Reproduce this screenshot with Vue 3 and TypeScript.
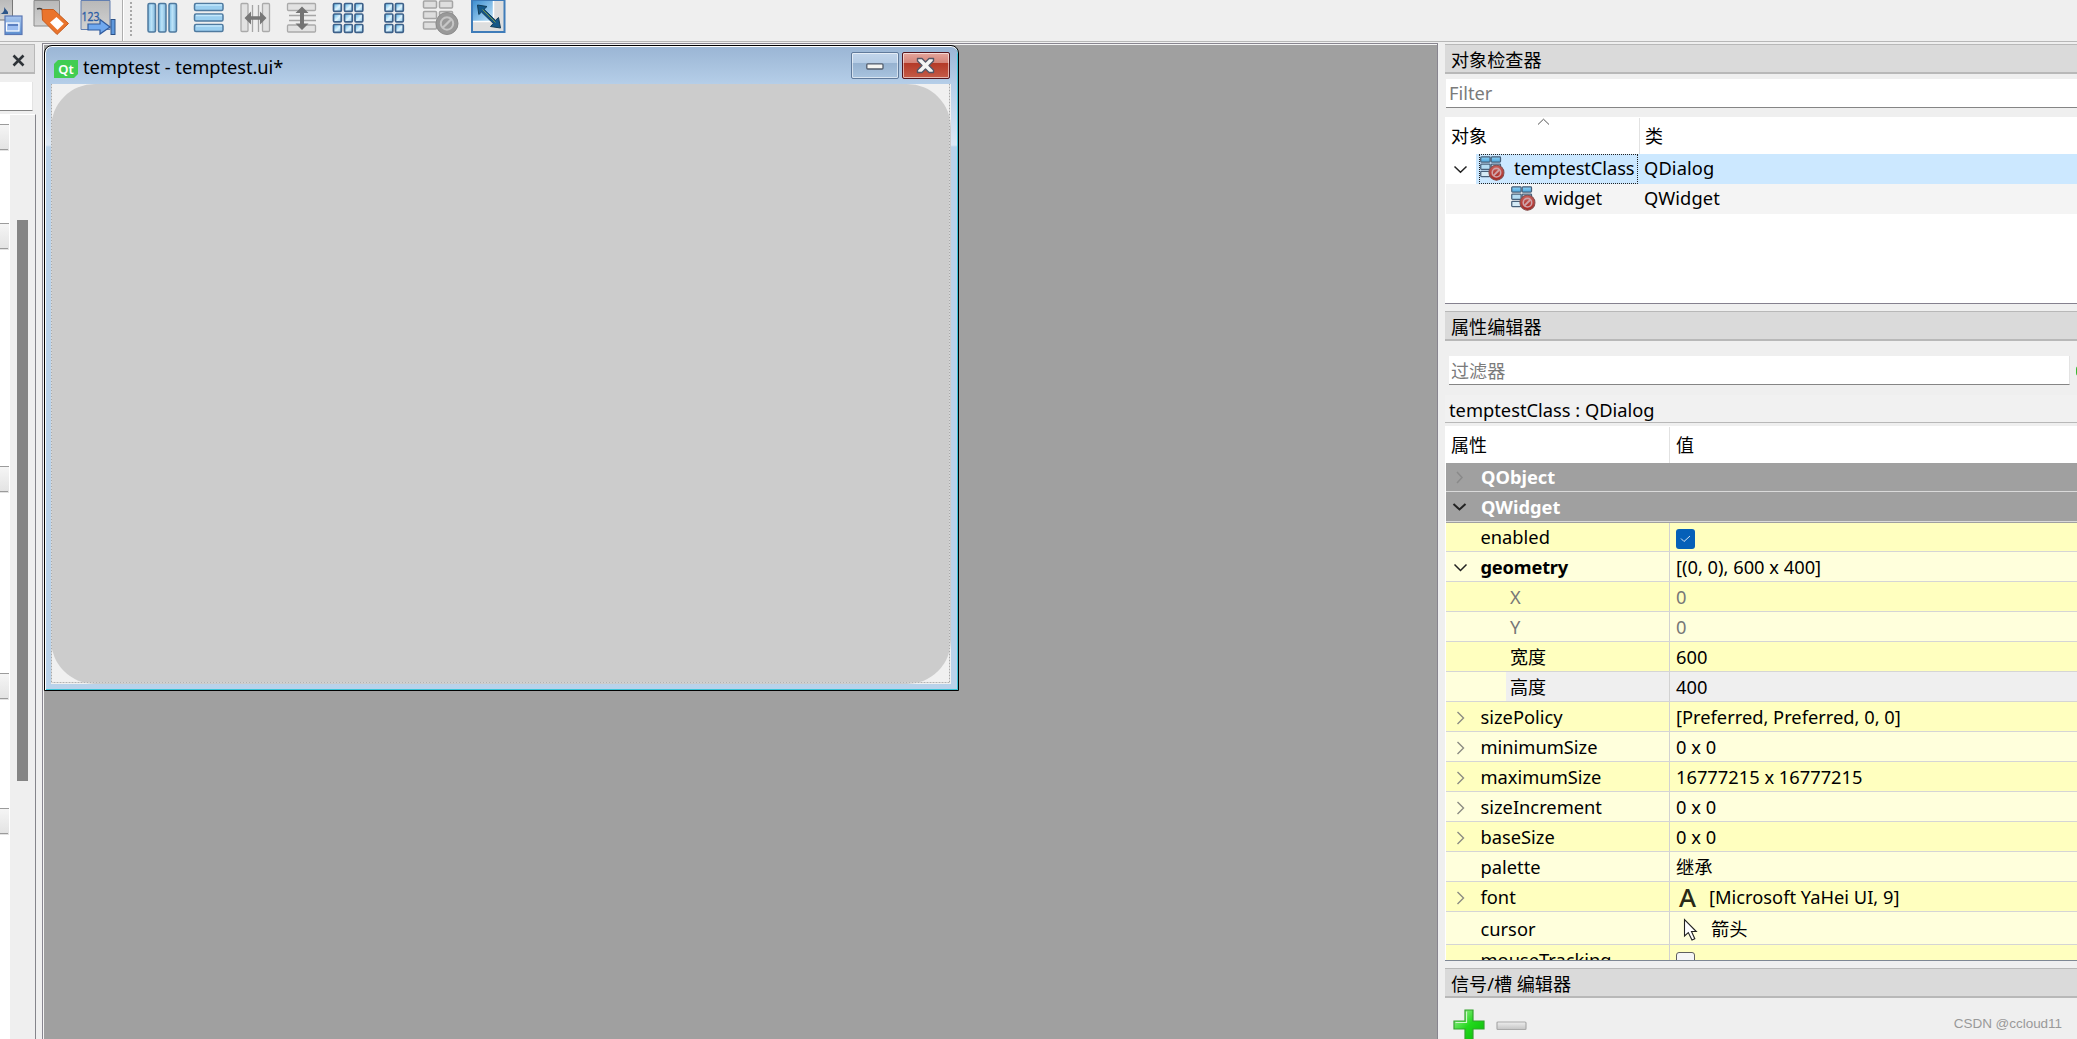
<script setup lang="ts">
interface Prop {
  name: string
  value: string
  kind?: 'child' | 'disabled' | 'selected' | 'check' | 'font' | 'cursor' | 'clipped'
  arrow?: 'open' | 'closed'
  bold?: boolean
}

const rows: Prop[] = [
  { name: 'enabled', value: '', kind: 'check' },
  { name: 'geometry', value: '[(0, 0), 600 x 400]', arrow: 'open', bold: true },
  { name: 'X', value: '0', kind: 'disabled' },
  { name: 'Y', value: '0', kind: 'disabled' },
  { name: '宽度', value: '600', kind: 'child' },
  { name: '高度', value: '400', kind: 'selected' },
  { name: 'sizePolicy', value: '[Preferred, Preferred, 0, 0]', arrow: 'closed' },
  { name: 'minimumSize', value: '0 x 0', arrow: 'closed' },
  { name: 'maximumSize', value: '16777215 x 16777215', arrow: 'closed' },
  { name: 'sizeIncrement', value: '0 x 0', arrow: 'closed' },
  { name: 'baseSize', value: '0 x 0', arrow: 'closed' },
  { name: 'palette', value: '继承' },
  { name: 'font', value: '[Microsoft YaHei UI, 9]', kind: 'font', arrow: 'closed' },
  { name: 'cursor', value: '箭头', kind: 'cursor' },
  { name: 'mouseTracking', value: '', kind: 'clipped' },
]

const objects = [
  { name: 'temptestClass', cls: 'QDialog', root: true },
  { name: 'widget', cls: 'QWidget', root: false },
]

const gridX = [333, 344, 354.5]
const gridX2 = [384.5, 395]
const gridY = [3, 13.5, 24]
</script>

<template>
  <div class="app">
    <svg class="defs" width="0" height="0" aria-hidden="true">
      <defs>
        <linearGradient id="bar" x1="0" y1="0" x2="1" y2="0">
          <stop offset="0" stop-color="#7cbbe3" /><stop offset=".45" stop-color="#bce4fa" /><stop offset="1" stop-color="#7fb4d8" />
        </linearGradient>
        <linearGradient id="cell" x1="0" y1="0" x2="1" y2="1">
          <stop offset="0" stop-color="#4fb0e6" /><stop offset=".55" stop-color="#dff3fd" /><stop offset="1" stop-color="#7fc0e4" />
        </linearGradient>
        <linearGradient id="tile" x1="0" y1="0" x2="0" y2="1">
          <stop offset="0" stop-color="#8fd0f4" /><stop offset="1" stop-color="#4aa6dc" />
        </linearGradient>
        <linearGradient id="paper" x1="0" y1="0" x2="0" y2="1">
          <stop offset="0" stop-color="#b8b8b8" /><stop offset="1" stop-color="#d2d2d2" />
        </linearGradient>
        <linearGradient id="blue" x1="0" y1="0" x2="0" y2="1">
          <stop offset="0" stop-color="#a9c6ee" /><stop offset="1" stop-color="#5c8fd0" />
        </linearGradient>
        <linearGradient id="sky" x1="0" y1="0" x2="1" y2="1">
          <stop offset="0" stop-color="#3f8fd0" /><stop offset="1" stop-color="#bfe4fa" />
        </linearGradient>
        <linearGradient id="red" x1="0" y1="0" x2="0" y2="1">
          <stop offset="0" stop-color="#c9605a" /><stop offset="1" stop-color="#a82622" />
        </linearGradient>
        <linearGradient id="green" x1="0" y1="0" x2="1" y2="1">
          <stop offset="0" stop-color="#b4f0a8" /><stop offset=".5" stop-color="#23d81d" /><stop offset="1" stop-color="#08b806" />
        </linearGradient>
        <linearGradient id="silver" x1="0" y1="0" x2="0" y2="1">
          <stop offset="0" stop-color="#ededed" /><stop offset="1" stop-color="#c4c4c4" />
        </linearGradient>
        <symbol id="layout" viewBox="0 0 24 24">
          <g stroke="#47607a" stroke-width="1.2">
            <rect x=".7" y=".8" width="9" height="5" rx=".8" fill="url(#tile)" /><rect x="10.700" y=".8" width="9" height="5" rx=".8" fill="url(#tile)" />
            <rect x=".7" y="7.800" width="9" height="5" rx=".8" fill="#b4dcf2" /><rect x="10.700" y="7.800" width="9" height="5" rx=".8" fill="#b4dcf2" />
            <rect x=".7" y="14.800" width="9" height="5" rx=".8" fill="#d5eaf5" />
          </g>
          <circle cx="15.800" cy="16" r="7.200" fill="url(#red)" stroke="#87504f" stroke-width="1" />
          <circle cx="15.800" cy="16" r="4.100" fill="none" stroke="#cfa3a8" stroke-width="1.500" />
          <path d="M13 18.800l5.600-5.600" stroke="#cfa3a8" stroke-width="1.700" />
        </symbol>
      </defs>
    </svg>

    <header class="toolbar">
      <svg width="28" height="36" viewBox="0 0 28 36">
        <path d="M-2-2H12.500V20H-2z" fill="url(#paper)" stroke="#777" />
        <path d="M-3 15C3 14 5 11 4 7L8 12V14H-3z" fill="#2e5689" />
        <rect x="5" y="16" width="17" height="18.500" fill="url(#blue)" stroke="#5a77b4" stroke-width="1.200" />
        <rect x="6.500" y="23" width="12.500" height="8" fill="#9cbdf0" stroke="#fff" stroke-width="1.200" />
        <path d="M8 25h10" stroke="#466bb0" stroke-width="1.500" />
      </svg>
      <svg width="46" height="36" viewBox="28 0 46 36">
        <path d="M34 .5H59.500V26H34z" fill="url(#paper)" stroke="#8b8b8b" />
        <path d="M37 9q5-2 9 5" fill="none" stroke="#404040" stroke-width="1.500" />
        <path d="M42 9.500L53.500 9.500 68.500 23.500 57 34.500 42.500 20z" fill="#ea742c" stroke="#c45a1c" />
        <path d="M56.500 17L63.800 23.800 57.500 30 50 22.500z" fill="#fff" />
      </svg>
      <svg width="48" height="36" viewBox="74 0 48 36">
        <path d="M81 .5H110V29.500H81z" fill="url(#paper)" stroke="#637fb0" />
        <text x="81.500" y="21" class="icon-digits" textLength="18" lengthAdjust="spacingAndGlyphs">123</text>
        <path d="M88 24H100V19.500L110 27 100 34V30H88z" fill="#70a8ee" stroke="#2f5a9d" stroke-width="1.200" />
        <rect x="111" y="19.500" width="4" height="15" fill="#5f98dc" stroke="#2c5288" />
      </svg>
      <svg width="18" height="41" viewBox="122 0 18 41">
        <path d="M122.500 0V41" stroke="#adadad" /><path d="M123.500 0V41" stroke="#fff" />
        <path d="M131 2V36" stroke="#a8a8a8" stroke-width="2" stroke-dasharray="2 2" />
      </svg>
      <svg width="45" height="36" viewBox="140 0 45 36">
        <rect v-for="x in [148, 158.500, 169]" :key="x" :x="x" y="3.500" width="7.500" height="28.500" rx="1.500" fill="url(#bar)" stroke="#4f7a9f" stroke-width="1.500" />
      </svg>
      <svg width="47" height="36" viewBox="185 0 47 36">
        <rect v-for="y in [3.500, 14, 24.500]" :key="y" x="194.500" :y="y" width="28.500" height="7" rx="1.500" fill="#9bcff0" stroke="#4f7a9f" stroke-width="1.500" />
        <path d="M196 5h26M196 15.500h26M196 26h26" stroke="#c4e8fc" stroke-width="1.500" />
      </svg>
      <svg width="46" height="36" viewBox="232 0 46 36">
        <g fill="#e2e2e2" stroke="#aaa" stroke-width="1.300"><rect x="241" y="3.500" width="7" height="28" rx="1" /><rect x="262.500" y="3.500" width="7" height="28" rx="1" /></g>
        <path d="M252.500 5V32M258.500 5V32" stroke="#a5a5a5" stroke-width="1.300" />
        <path d="M244.500 18L251 11.500V16.200H260V11.500L266.500 18 260 24.500V19.800H251V24.500z" fill="#777" />
      </svg>
      <svg width="46" height="36" viewBox="278 0 46 36">
        <g fill="#e2e2e2" stroke="#aaa" stroke-width="1.300"><rect x="287.500" y="3.500" width="28" height="7" rx="1" /><rect x="287.500" y="25" width="28" height="7" rx="1" /></g>
        <path d="M289 15.500H316M289 20.500H316" stroke="#a5a5a5" stroke-width="1.300" />
        <path d="M302 6.500L308.500 13H304V23.500H308.500L302 30 295.500 23.500H300V13H295.500z" fill="#747474" />
      </svg>
      <svg width="47" height="36" viewBox="324 0 47 36">
        <template v-for="y in gridY" :key="y">
          <rect v-for="x in gridX" :key="x" :x="x + .500" :y="y + .500" width="7.800" height="7.800" rx="1" fill="url(#cell)" stroke="#3d6089" stroke-width="1.700" />
        </template>
      </svg>
      <svg width="43" height="36" viewBox="371 0 43 36">
        <template v-for="y in gridY" :key="y">
          <rect v-for="x in gridX2" :key="x" :x="x + .500" :y="y + .500" width="7.800" height="7.800" rx="1" fill="url(#cell)" stroke="#3d6089" stroke-width="1.700" />
        </template>
      </svg>
      <svg width="51" height="36" viewBox="414 0 51 36">
        <g fill="#dedede" stroke="#a5a5a5" stroke-width="1.500">
          <rect x="423.500" y="1" width="13" height="7" rx="1" /><rect x="439.500" y="1" width="13" height="7" rx="1" />
          <rect x="423.500" y="11.500" width="13" height="7" rx="1" /><rect x="439.500" y="11.500" width="13" height="7" rx="1" />
          <rect x="423.500" y="22" width="13" height="7" rx="1" />
        </g>
        <circle cx="447" cy="23.500" r="11" fill="#999" stroke="#8c8c8c" />
        <circle cx="447" cy="23.500" r="6.200" fill="none" stroke="#c6c6c6" stroke-width="2" />
        <path d="M442.700 27.800l8.600-8.600" stroke="#c6c6c6" stroke-width="2.300" />
      </svg>
      <svg width="47" height="36" viewBox="465 0 47 36">
        <rect x="472" y="0" width="32.500" height="32" fill="#dedede" stroke="#3f7cb9" stroke-width="2" />
        <rect x="473" y="1" width="20" height="20" fill="url(#sky)" />
        <path d="M493.500 1V21.500H473" fill="none" stroke="#fff" stroke-width="1.500" />
        <path d="M477.500 5L487 6.500 484 9.300 495.500 20.300 498.500 17.500 500.500 28 490.500 26.500 493.300 23.500 481.500 12 478.800 14.500z" fill="#155787" stroke="#123c58" />
        <path d="M482.500 9.500L495.500 22.500" stroke="#7d9844" stroke-width="1" />
      </svg>
    </header>

    <main class="body">
      <aside class="left">
        <div class="left-title"><svg width="13" height="13" viewBox="0 0 13 13"><path d="M1.500 1.500L11.500 11.500M11.500 1.500L1.500 11.500" stroke="#2e3338" stroke-width="2.600" /></svg></div>
        <div class="left-edit"></div>
        <div class="left-body">
          <div class="left-list"><i></i><i></i><i></i><i></i><i></i></div>
          <div class="scroll"><div class="thumb"></div></div>
        </div>
      </aside>

      <section class="mdi">
        <div class="window">
          <div class="win-title">
            <span class="qt">Qt</span>
            <span class="win-name">temptest - temptest.ui*</span>
            <span class="win-btn min"><svg width="18" height="7" viewBox="0 0 18 7"><rect x=".8" y=".8" width="16.200" height="5.200" rx="1" fill="#f5f5f2" stroke="#515c6c" stroke-width="1.300" /></svg></span>
            <span class="win-btn close"><svg width="19" height="17" viewBox="0 0 19 17"><path d="M1.500 1.500H6L9.500 5 13 1.500h4.500V4L13 8.500 17.500 13v2.500H13L9.500 12 6 15.500H1.500V13L6 8.500 1.500 4z" fill="#f4f4f4" stroke="#535666" stroke-width="1.400" stroke-linejoin="round" /></svg></span>
          </div>
          <div class="canvas"><div class="form"></div></div>
        </div>
      </section>

      <aside class="right">
        <div class="dock">对象检查器</div>
        <div class="filter f1">Filter</div>
        <div class="tree">
          <div class="tree-head">
            <span class="c1">对象</span><span class="c2">类</span>
            <svg class="sort" width="13" height="8" viewBox="0 0 13 8"><path d="M1 6.500L6.500 1.200 12 6.500" fill="none" stroke="#555" stroke-width="1" /></svg>
          </div>
          <div v-for="o in objects" :key="o.name" class="tree-row" :class="{ root: o.root }">
            <div class="branch">
              <svg v-if="o.root" width="15" height="9" viewBox="0 0 15 9"><path d="M1.500 1.500L7.500 7.300 13.500 1.500" fill="none" stroke="#222" stroke-width="1.500" /></svg>
            </div>
            <div class="item" :class="{ focus: o.root }">
              <svg width="25" height="25"><use href="#layout" width="25" height="25" /></svg>
              <span>{{ o.name }}</span>
            </div>
            <span class="cls">{{ o.cls }}</span>
          </div>
        </div>

        <div class="dock">属性编辑器</div>
        <div class="filter-row"><div class="filter f2">过滤器</div><span class="add-edge"></span></div>
        <div class="obj-label">temptestClass : QDialog</div>
        <div class="props">
          <div class="prop-head"><span class="p1">属性</span><span>值</span></div>
          <div class="group">
            <svg class="garrow" width="15" height="15" viewBox="0 0 15 15"><path d="M5 2L10 7.500 5 13" fill="none" stroke="#8a8a8a" stroke-width="1.500" /></svg>QObject
          </div>
          <div class="group second">
            <svg class="garrow" width="15" height="15" viewBox="0 0 15 15"><path d="M1.500 4L7.500 9.500 13.500 4" fill="none" stroke="#222" stroke-width="2" /></svg>QWidget
          </div>
          <div v-for="(r, i) in rows" :key="r.name" class="prop" :class="[r.kind, { alt: i % 2 === 1 }]">
            <div class="pn">
              <svg v-if="r.arrow" class="arrow" width="15" height="15" viewBox="0 0 15 15">
                <path v-if="r.arrow === 'open'" d="M1.500 4.500L7.500 10.500 13.500 4.500" fill="none" stroke="#222" stroke-width="1.500" />
                <path v-else d="M4.500 2L10.500 8 4.500 14" fill="none" stroke="#8b8b83" stroke-width="1.400" />
              </svg>
              <span class="nm" :class="{ bold: r.bold }">{{ r.name }}</span>
            </div>
            <div class="pv">
              <span v-if="r.kind === 'check'" class="tick"><svg width="11" height="8" viewBox="0 0 11 8"><path d="M1 3.500L4 6.500 10 1" fill="none" stroke="#d3e4f3" stroke-width="1" /></svg></span>
              <span v-if="r.kind === 'clipped'" class="box"></span>
              <span v-if="r.kind === 'font'" class="letter">A</span>
              <svg v-if="r.kind === 'cursor'" class="pointer" width="15" height="24" viewBox="0 0 15 24"><path d="M1.500 1.500V18L5.300 14.600 9 22 11.800 20.800 8.500 13.500H13.300z" fill="#fff" stroke="#222" stroke-width="1.100" /></svg>
              <span class="val">{{ r.value }}</span>
            </div>
          </div>
        </div>

        <div class="dock">信号/槽 编辑器</div>
        <footer class="signals">
          <svg width="32" height="32" viewBox="0 0 32 32"><path d="M12 1H20V12H31V20H20V31H12V20H1V12H12z" fill="url(#green)" stroke="#32a32d" stroke-width="1.200" /><path d="M13.500 2.500V13.500H2.500" fill="none" stroke="#d1f7cc" stroke-width="1.200" /></svg>
          <svg class="minus" width="31" height="10" viewBox="0 0 31 10"><rect x="1" y="1" width="29" height="7.500" rx="1" fill="url(#silver)" stroke="#aaa" stroke-width="1.200" /></svg>
          <span class="mark">CSDN @ccloud11</span>
        </footer>
      </aside>
    </main>
  </div>
</template>

<style>
body { margin: 0; overflow: hidden; background: #efefef; }
</style>

<style scoped>
* { box-sizing: border-box; }
.app { width: 2077px; height: 1039px; overflow: hidden; display: flex; flex-direction: column; background: #efefef; color: #000; font: 18.300px/30px "Noto Sans", "Noto Sans CJK SC", sans-serif; white-space: nowrap; }
.defs { position: absolute; }
.toolbar { height: 42px; flex: none; display: flex; align-items: flex-start; border-bottom: 1px solid #b7b7b7; }
.toolbar svg, .item svg { flex: none; display: block; }
.icon-digits { font: 13px "Noto Sans", sans-serif; fill: #2b5da5; stroke: #2b5da5; stroke-width: .3; }
.body { flex: 1; min-height: 0; display: flex; }

.left { width: 36px; flex: none; padding-top: 2px; display: flex; flex-direction: column; }
.left-title { width: 35px; height: 30px; background: #dadada; border: 1px solid #b8b8b8; border-left: 0; border-bottom-width: 2px; display: flex; align-items: center; padding: 4px 0 0 12px; }
.left-edit { width: 33px; height: 29px; margin-top: 8px; background: #fff; border-bottom: 1px solid #858585; border-right: 1px solid #e3e3e3; }
.left-body { flex: 1; margin-top: 3px; display: flex; border-right: 1px solid #85858b; border-top: 1px solid #fff; }
.left-list { width: 10px; background: #fff; display: flex; flex-direction: column; padding-top: 9px; }
.left-list i { width: 9px; height: 27px; border-top: 1px solid #9b9b9b; background: linear-gradient(#9b9b9b, #9b9b9b) 0 24px / 8px 1px no-repeat, linear-gradient(#f5f5f5, #e2e2e2); margin-bottom: 72px; flex: none; }
.left-list i:nth-child(2) { margin-bottom: 216px; }
.left-list i:nth-child(3) { margin-bottom: 180px; }
.left-list i:nth-child(4) { margin-bottom: 108px; }
.scroll { padding: 105px 0 0 7px; }
.thumb { width: 11px; height: 561px; background: #858585; }

.mdi { width: 1396px; flex: none; margin: 1px 0 0 6px; border: 1px solid #88858f; border-bottom: 0; background: #a0a0a0; padding: 1px 0 0 1px; box-shadow: inset 0 1px #f4f4f4, inset 1px 0 #f4f4f4; }
.window { width: 915px; height: 646px; border: 1px solid #000; border-radius: 8px 8px 0 0; background: linear-gradient(#9ab5d4 0, #b5cee8 38px, #dce8f5 99px, #b9d2ea 101px); box-shadow: inset 0 1px #fff, inset 1px 0 #fff, inset -1px -1px #3ac2d6; padding: 1px 6px 5px; display: flex; flex-direction: column; }
.win-title { height: 37px; flex: none; display: flex; align-items: center; padding-left: 3px; }
.qt { width: 24px; height: 18px; margin-top: 7px; background: #41cd52; color: #fff; font: 600 13px/18px "Noto Sans", sans-serif; text-align: center; clip-path: polygon(4px 0, 100% 0, 100% 14px, 20px 100%, 0 100%, 0 4px); }
.win-name { margin: 3px 0 0 5px; flex: 1; letter-spacing: -.05px; }
.win-btn { width: 48px; height: 27px; margin-top: -1px; border: 1px solid #607a9b; border-radius: 2px; box-shadow: inset 0 0 0 1px #ffffff90; background: linear-gradient(#c2d5eb, #b5cce5 41%, #96b2d0 42%, #a9c4df); display: flex; align-items: center; justify-content: center; }
.min { padding-top: 3px; padding-right: 1px; }
.close { margin-left: 3px; margin-right: 2px; border-color: #54151d; background: linear-gradient(#e5a59c, #d38378 41%, #b43a28 42%, #c55c48); padding-right: 1px; }
.canvas { width: 900px; height: 600px; background: #f0f0f0; position: relative; }
.canvas::after { content: ""; position: absolute; inset: 0 1px 1px 0; background: repeating-linear-gradient(#a8a8a8 0 1px, #d6d6d6 1px 3px) 0 0 / 1px 100% no-repeat, repeating-linear-gradient(#a8a8a8 0 1px, #d6d6d6 1px 3px) 100% 0 / 1px 100% no-repeat, repeating-linear-gradient(90deg, #b2b2b2 0 1px, #d2d2d2 1px 3px) 0 100% / 100% 1px no-repeat; }
.form { width: 900px; height: 600px; border-radius: 44px; background: #ccc; }

.right { flex: 1; min-width: 0; margin: 2px 0 0 7px; display: flex; flex-direction: column; }
.dock { height: 30px; flex: none; background: #dadada; border-top: 1px solid #b8b8b8; border-bottom: 2px solid #b8b8b8; padding-left: 6px; line-height: 30px; font-size: 18.100px; }
.filter { height: 29px; background: #fff; color: #7b7b7b; border-bottom: 1px solid #858585; line-height: 28px; }
.f1 { flex: none; margin: 5px 0 9px 1px; padding-left: 3px; }
.tree { height: 187px; flex: none; background: #fff; border-bottom: 1px solid #85818f; }
.tree-head { height: 37px; position: relative; display: flex; padding-left: 6px; line-height: 38px; font-size: 18px; }
.c1 { width: 189px; border-right: 1px solid #e2e2e2; margin-top: 1px; line-height: 37px; }
.c2 { padding-left: 5px; }
.sort { position: absolute; left: 92px; top: 1px; }
.tree-row { height: 30px; display: flex; background: #f4f4f4; margin-left: 1px; }
.tree-row.root { background: linear-gradient(90deg, #fff 30px, #cce8ff 30px); }
.branch { width: 33px; padding-left: 7px; display: flex; align-items: center; }
.tree-row:not(.root) .branch { width: 63px; }
.item { width: 159px; height: 30px; display: flex; align-items: center; line-height: 28px; letter-spacing: -.08px; }
.item span { margin-top: -2px; }
.item:not(.focus) { width: 129px; padding-left: 2px; }
.item svg { margin: -1px 8px 0 0; }
.focus { outline: 1px dotted #222; outline-offset: -1px; padding-left: 1px; }
.focus svg { margin-right: 9px; }
.cls { padding-left: 6px; line-height: 28px; letter-spacing: .1px; }
.tree + .dock { margin-top: 7px; }
.filter-row { height: 29px; flex: none; margin: 15px 0 10px 4px; display: flex; align-items: center; overflow: hidden; }
.f2 { width: 621px; flex: none; padding-left: 2px; font-size: 18.100px; line-height: 31px; border-right: 1px solid #e3e3e3; }
.add-edge { width: 7px; flex: none; height: 10px; margin-left: 6px; border-radius: 3px 0 0 3px; background: #39b833; }
.obj-label { height: 28px; flex: none; background: #f1f1f1; border-bottom: 1px solid #b8b8b8; padding-left: 4px; line-height: 30px; }
.props { height: 535px; flex: none; margin-top: 3px; overflow: hidden; background: #fff; border-bottom: 1px solid #7e8794; padding-left: 1px; }
.prop-head { height: 37px; display: flex; line-height: 39px; font-size: 18px; padding-left: 5px; }
.p1 { width: 219px; margin: 1px 6px 0 0; border-right: 1px solid #e2e2e2; line-height: 37px; }
.group { height: 29px; background: #a0a0a0; border-bottom: 1px solid #dadada; color: #fff; font-weight: 700; display: flex; align-items: center; line-height: 28px; }
.group.second { height: 31px; border-bottom: 1px solid #a0a0a0; box-shadow: inset 0 -1px #dadada; }
.garrow { margin: 0 14px 0 6px; }
.prop { height: 30px; display: flex; background: #ffffbf; border-bottom: 1px solid #d5d5d5; line-height: 30px; }
.prop.check { height: 29px; line-height: 28px; }
.prop.alt { background: #ffffdc; }
.pn { width: 224px; flex: none; display: flex; border-right: 1px solid #d2d2d2; position: relative; }
.arrow { position: absolute; left: 7px; top: 8px; }
.nm { padding-left: 34.500px; }
.nm.bold { font-weight: 700; letter-spacing: -.2px; }
.child .nm, .disabled .nm { padding-left: 64px; }
.child .nm, .selected .nm { font-size: 18px; }
.disabled { color: #777; }
.selected .nm { flex: 1; margin-left: 60px; padding-left: 4px; background: #efefef; }
.selected .pv { background: #efefef; }
.pv { flex: 1; display: flex; padding-left: 6px; }
.tick { width: 19px; height: 20px; margin-top: 6px; background: #0560b8; border-radius: 3px; display: flex; align-items: center; justify-content: center; }
.box { width: 19px; height: 20px; margin-top: 7px; border: 1px solid #606060; border-radius: 3px; background: #f6f6f6; }
.letter { width: 26px; padding-left: 3px; margin-right: 7px; color: #292916; font-size: 26px; font-weight: 500; }
.cursor { height: 33px; line-height: 33px; }
.pointer { margin: 6px 13px 0 7px; }
.props + .dock { margin-top: 7px; }
.signals { flex: 1; display: flex; align-items: flex-start; padding: 11px 15px 0 8px; }
.minus { margin: 12px 0 0 11px; }
.mark { margin-left: auto; color: #999; font: 13.500px/24px "Liberation Sans", sans-serif; margin-top: 3px; letter-spacing: -.04px; }
</style>
